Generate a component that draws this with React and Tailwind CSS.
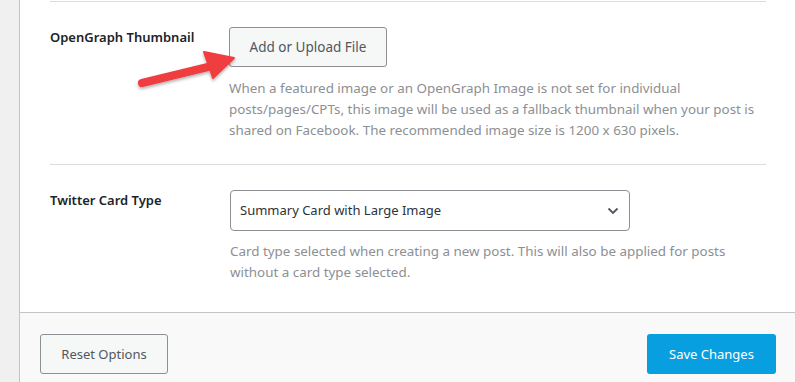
function Arrow() {
  return (
    <svg
      className="absolute left-[110px] top-[44px] overflow-visible"
      width="120"
      height="50"
      viewBox="0 0 120 50"
    >
      <defs>
        <filter id="sh" x="-20%" y="-40%" width="140%" height="180%">
          <feDropShadow dx="0" dy="2" stdDeviation="1.5" floodColor="#000" floodOpacity="0.3" />
        </filter>
      </defs>
      <g filter="url(#sh)">
        <line x1="12" y1="39" x2="82" y2="22" stroke="#f03c41" strokeWidth="8" strokeLinecap="round" />
        <polygon points="74,8 104,14 83,34" fill="#f03c41" stroke="#f03c41" strokeWidth="2" strokeLinejoin="round" />
      </g>
    </svg>
  );
}

export default function App() {
  return (
    <div
      className="flex h-[382px] w-[795px] overflow-hidden bg-white"
      style={{ fontFamily: '"Noto Sans", "Open Sans", sans-serif' }}
    >
      <div className="w-[20px] shrink-0 border-r border-[#c3c4c7] bg-[#f0f0f1]" />
      <div className="flex flex-1 flex-col">
        <div className="relative flex-1 pl-[30px] pr-[29px] pt-px">
          <div className="border-t border-[#dcdcde]" />
          <div className="flex h-[163px] border-b border-[#dcdcde] pt-[25px]">
            <div className="w-[179px] shrink-0 pt-px text-[13px] font-semibold leading-[18px] text-[#1d2327]">
              OpenGraph Thumbnail
            </div>
            <div>
              <button className="h-[40px] w-[158px] rounded-[3px] border border-[#8c8f94] bg-[#f6f7f7] pt-px text-[13.5px] text-[#50575e]">
                Add or Upload File
              </button>
              <div className="mt-[11px] text-[13.4px] leading-[21px] text-[#8c8f94]">
                <div>When a featured image or an OpenGraph Image is not set for individual</div>
                <div>posts/pages/CPTs, this image will be used as a fallback thumbnail when your post is</div>
                <div>shared on Facebook. The recommended image size is 1200 x 630 pixels.</div>
              </div>
            </div>
          </div>
          <div className="flex pt-[25px]">
            <div className="w-[180px] shrink-0 pt-px text-[13px] font-semibold leading-[18px] text-[#1d2327]">
              Twitter Card Type
            </div>
            <div>
              <div className="flex h-[41px] w-[400px] items-center justify-between rounded-[4px] border border-[#8c8f94] bg-white pl-[9px] pr-[10px] text-[13px] text-[#2c3338]">
                <span>Summary Card with Large Image</span>
                <svg width="12" height="8" viewBox="0 0 12 8" fill="none">
                  <path d="M1.5 1.5 L6 6 L10.5 1.5" stroke="#50575e" strokeWidth="1.8" />
                </svg>
              </div>
              <div className="mt-[10px] text-[13.4px] leading-[21px] text-[#8c8f94]">
                <div>Card type selected when creating a new post. This will also be applied for posts</div>
                <div>without a card type selected.</div>
              </div>
            </div>
          </div>
          <Arrow />
        </div>
        <div className="flex h-[70px] items-start justify-between border-t border-[#c3c4c7] bg-[#f9f9f9] pl-[20px] pr-[19px] pt-[21px]">
          <button className="h-[40px] w-[128px] rounded-[3px] border border-[#8c8f94] bg-[#f6f7f7] pt-px text-[13px] text-[#50575e]">
            Reset Options
          </button>
          <button className="h-[40px] w-[129px] rounded-[3px] bg-[#079fe0] pt-px text-[13px] text-white">
            Save Changes
          </button>
        </div>
      </div>
    </div>
  );
}
